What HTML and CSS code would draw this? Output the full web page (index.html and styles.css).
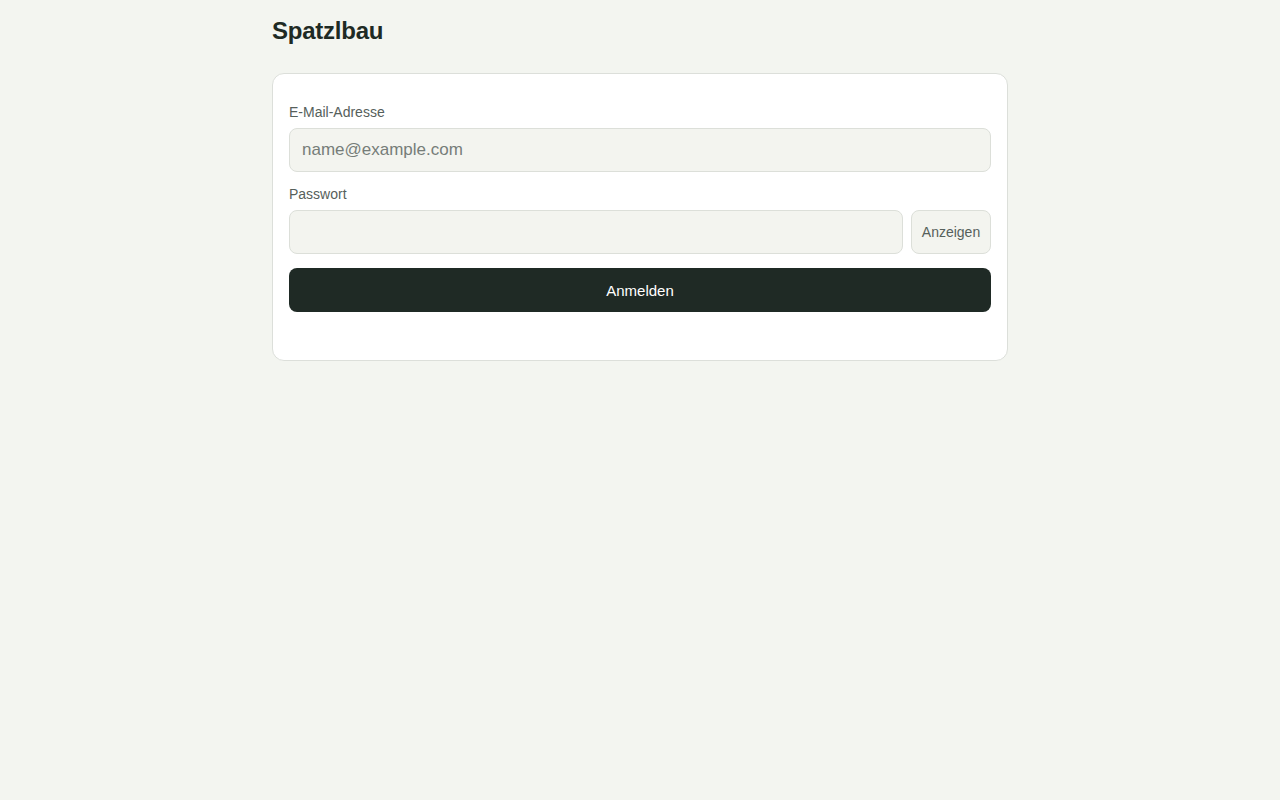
FILE: index.html
```html
<!DOCTYPE html>
<html lang="de">
<head>
<meta charset="utf-8">
<title>Spatzlbau</title>
<link rel="stylesheet" href="styles.css">
</head>
<body>
<main class="page">
  <h1 class="brand">Spatzlbau</h1>
  <section class="card">
    <form class="form">
      <label class="label" for="email">E-Mail-Adresse</label>
      <input class="input" id="email" type="email" placeholder="name@example.com">
      <label class="label label-pw" for="pw">Passwort</label>
      <div class="pw-row">
        <input class="input" id="pw" type="password">
        <button type="button" class="show-btn">Anzeigen</button>
      </div>
      <button type="submit" class="submit">Anmelden</button>
    </form>
  </section>
</main>
</body>
</html>
```
FILE: styles.css
```css
* { box-sizing: border-box; }
html, body { margin: 0; padding: 0; }
body {
  background: #f3f5f0;
  font-family: "Liberation Sans", Arial, sans-serif;
  color: #1e2a24;
}
.page {
  width: 736px;
  margin: 0 auto;
  padding-top: 16px;
}
.brand {
  margin: 0 0 27px;
  font-size: 24px;
  line-height: 30px;
  font-weight: 700;
  letter-spacing: -0.01em;
  color: #1e2a24;
}
.card {
  background: #ffffff;
  border: 1px solid #dcdfda;
  border-radius: 12px;
  padding: 28px 16px 48px;
}
.form {
  display: flex;
  flex-direction: column;
}
.label {
  font-size: 14px;
  line-height: 20px;
  color: #56605b;
  margin-bottom: 6px;
}
.label-pw { margin-top: 12px; }
.input {
  height: 44px;
  width: 100%;
  background: #f3f4ef;
  border: 1px solid #dcdfd9;
  border-radius: 8px;
  padding: 0 12px;
  font-family: inherit;
  font-size: 17px;
  color: #1e2a24;
  outline: none;
}
.input::placeholder { color: #767d79; }
.pw-row {
  display: flex;
  gap: 8px;
}
.pw-row .input { flex: 1; }
.show-btn {
  width: 80px;
  height: 44px;
  flex: none;
  background: #f3f4ef;
  border: 1px solid #dcdfd9;
  border-radius: 8px;
  font-family: inherit;
  font-size: 14px;
  color: #56605b;
  padding: 0;
}
.submit {
  margin-top: 14px;
  height: 44px;
  background: #1f2a25;
  color: #ffffff;
  border: none;
  border-radius: 8px;
  font-family: inherit;
  font-size: 15px;
}
```
